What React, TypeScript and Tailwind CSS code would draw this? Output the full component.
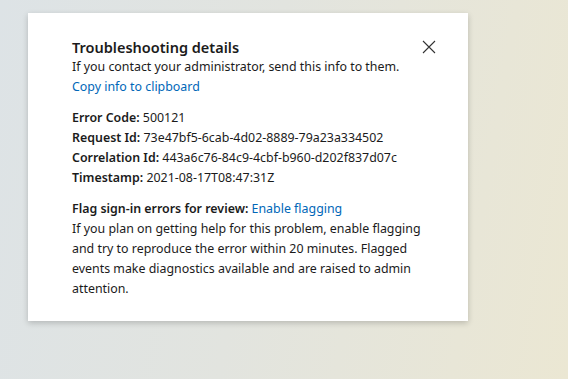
import React from "react";

export default function App() {
  return (
    <div
      className="w-[568px] h-[379px] overflow-hidden bg-[linear-gradient(100deg,#dde3e6_0%,#e2e4df_45%,#ebe7d3_100%)] pt-[13px] pl-[28px]"
      style={{ fontFamily: '"Noto Sans", "Open Sans", sans-serif' }}
    >
      <div className="relative w-[440px] bg-white shadow-[0_2px_6px_rgba(0,0,0,0.2)] pl-[44px] pr-[38px] pt-[24px] pb-[22px] text-[12.4px] leading-[20px] text-[#1b1b1b]">
        <button className="absolute right-[32px] top-[27px] w-[14px] h-[14px] flex items-center justify-center">
          <svg width="14" height="14" viewBox="0 0 14 14">
            <path d="M1 1 L13 13 M13 1 L1 13" stroke="#333" strokeWidth="1.1" fill="none" />
          </svg>
        </button>
        <div className="text-[14.5px] leading-[20px] font-semibold">Troubleshooting details</div>
        <div>If you contact your administrator, send this info to them.</div>
        <div className="text-[#0067b8]">Copy info to clipboard</div>
        <div className="mt-[11px]">
          <div><span className="font-semibold">Error Code:</span> 500121</div>
          <div><span className="font-semibold">Request Id:</span> 73e47bf5-6cab-4d02-8889-79a23a334502</div>
          <div><span className="font-semibold">Correlation Id:</span> 443a6c76-84c9-4cbf-b960-d202f837d07c</div>
          <div><span className="font-semibold">Timestamp:</span> 2021-08-17T08:47:31Z</div>
        </div>
        <div className="mt-[11px]">
          <div><span className="font-semibold">Flag sign-in errors for review:</span> <span className="text-[#0067b8]">Enable flagging</span></div>
          <div>If you plan on getting help for this problem, enable flagging and try to reproduce the error within 20 minutes. Flagged events make diagnostics available and are raised to admin attention.</div>
        </div>
      </div>
    </div>
  );
}
